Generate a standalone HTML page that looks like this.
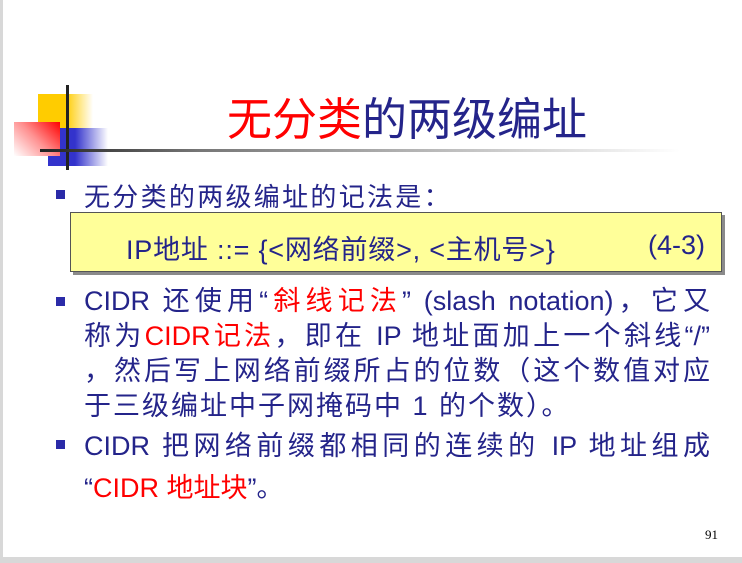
<!DOCTYPE html>
<html><head><meta charset="utf-8"><style>
body{margin:0;width:742px;height:563px;background:#fff;position:relative;overflow:hidden;font-family:"Liberation Sans","Noto Sans CJK SC",sans-serif;}
.a{position:absolute;}
.t{color:#24248a;font-size:27px;white-space:nowrap;}
.j{width:626px;text-align:justify;text-align-last:justify;white-space:normal;}
.j div{height:35px;}
.r{color:#f00;}
.b{position:absolute;width:9px;height:9px;background:#2b2ba8;}
</style></head><body>
<div class="a" style="left:0;top:0;width:3px;height:563px;background:#d8d8d8"></div>
<div class="a" style="left:0;top:557px;width:742px;height:6px;background:#d8d8d8"></div>
<div class="a" style="left:38px;top:94px;width:55px;height:36px;background:linear-gradient(90deg,#ffcc00 0,#ffcc00 50%,#fff 100%)"></div>
<div class="a" style="left:48px;top:128px;width:60px;height:38px;background:linear-gradient(90deg,#3333cc 0,#3333cc 45%,#fff 100%)"></div>
<div class="a" style="left:14px;top:122px;width:46px;height:34px;background:linear-gradient(225deg,#ff0000 0,#ff9090 50%,#fff 100%)"></div>
<div class="a" style="left:66px;top:85px;width:3px;height:85px;background:#222"></div>
<div class="a" style="left:40px;top:149px;width:160px;height:3px;background:linear-gradient(90deg,#222,#777)"></div>
<div class="a" style="left:200px;top:149px;width:480px;height:3px;background:linear-gradient(90deg,#777,#fff)"></div>
<div class="a" style="left:227px;top:83px;font-size:45px;color:#24248a;white-space:nowrap"><span class="r">无分类</span>的两级编址</div>
<div class="b" style="left:56px;top:190px"></div>
<div class="a t" style="left:84px;top:177px;font-size:26px;letter-spacing:2.3px">无分类的两级编址的记法是：</div>
<div class="a" style="left:73px;top:215px;width:652px;height:60px;background:#8a8a8a"></div>
<div class="a" style="left:70px;top:212px;width:650px;height:58px;background:#ffff99;border:1px solid #555"></div>
<div class="a t" style="left:126px;top:228px;letter-spacing:0.8px">IP地址 ::= {&lt;网络前缀&gt;, &lt;主机号&gt;}</div>
<div class="a t" style="left:648px;top:230px">(4-3)</div>
<div class="b" style="left:56px;top:297px"></div>
<div class="a t j" style="left:84px;top:284px;line-height:35px">
<div>CIDR 还使用“<span class="r">斜线记法</span>” (slash notation)，它又</div>
<div>称为<span class="r">CIDR记法</span>，即在 IP 地址面加上一个斜线“/”</div>
<div>，然后写上网络前缀所占的位数（这个数值对应</div>
</div>
<div class="a t" style="left:84px;top:389px;line-height:35px;letter-spacing:2px">于三级编址中子网掩码中 1 的个数）。</div>
<div class="b" style="left:56px;top:440px"></div>
<div class="a t j" style="left:84px;top:427px;line-height:38px"><div style="height:38px">CIDR 把网络前缀都相同的连续的 IP 地址组成</div></div>
<div class="a t" style="left:84px;top:466px">“<span class="r">CIDR 地址块</span>”。</div>
<div class="a" style="left:705px;top:527px;font-family:'Liberation Serif',serif;font-size:13px">91</div>
</body></html>
